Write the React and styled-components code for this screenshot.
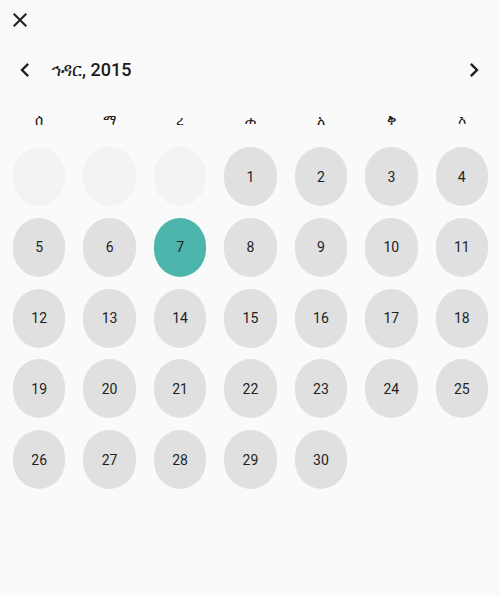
import styled, { createGlobalStyle } from "styled-components"

const GlobalStyle = createGlobalStyle`
	html, body {
		margin: 0;
		padding: 0;
		background: #fafafa;
	}
	body {
		font-family: Roboto, "Noto Sans", "DejaVu Sans", sans-serif;
		color: #1f1f1f;
	}
`

const Page = styled.div`
	width: 500px;
	height: 595px;
	background: #fafafa;
	display: flex;
	flex-direction: column;
`

const TopBar = styled.div`
	display: flex;
	padding: 8px;
`

const IconButton = styled.button`
	border: none;
	background: transparent;
	padding: 0;
	display: flex;
	align-items: center;
	justify-content: center;
	color: #1f1f1f;
	cursor: pointer;
	&:focus {
		outline: none;
	}
`

const MonthBar = styled.div`
	display: flex;
	align-items: center;
	padding: 0 12px 0 11px;
	margin-top: 16px;
	height: 28px;
`

const Title = styled.div`
	flex: 1;
	margin-left: 12px;
	font-size: 18px;
	font-weight: 500;
	color: #1a1a1a;
`

const Grid = styled.div`
	display: grid;
	grid-template-columns: repeat(7, 1fr);
	column-gap: 18px;
	padding: 0 12px 0 13px;
`

const WeekDays = styled(Grid)`
	margin-top: 25px;
	height: 22px;
	align-items: center;
`

const WeekDay = styled.div`
	text-align: center;
	font-size: 14px;
	color: #1a1a1a;
`

const Days = styled(Grid)`
	margin-top: 16px;
	row-gap: 11.75px;
`

const Day = styled.div`
	height: 59px;
	border-radius: 26px / 28px;
	display: flex;
	align-items: center;
	justify-content: center;
	font-size: 14px;
	color: #1f1f1f;
	background: ${(p) => (p.$selected ? "#4db6ac" : p.$blank ? "#f3f3f3" : "#e0e0e0")};
`

const Spacer = styled.div`
	height: 59px;
`

function Close() {
	return (
		<svg width="24" height="24" viewBox="0 0 24 24" fill="currentColor">
			<path d="M19 6.41L17.59 5 12 10.59 6.41 5 5 6.41 10.59 12 5 17.59 6.41 19 12 13.41 17.59 19 19 17.59 13.41 12z" />
		</svg>
	)
}

function Chevron({ right }) {
	return (
		<svg width="28" height="28" viewBox="0 0 24 24" fill="currentColor">
			{right ? (
				<path d="M10 6L8.59 7.41 13.17 12l-4.58 4.59L10 18l6-6z" />
			) : (
				<path d="M15.41 7.41L14 6l-6 6 6 6 1.41-1.41L10.83 12z" />
			)}
		</svg>
	)
}

const weekDays = ["ሰ", "ማ", "ረ", "ሐ", "አ", "ቅ", "እ"]
const offset = 3
const selected = 7

export default function App() {
	const cells = []
	for (let i = 0; i < offset; i++) cells.push(<Day key={"b" + i} $blank />)
	for (let d = 1; d <= 30; d++) {
		cells.push(
			<Day key={d} $selected={d === selected}>
				{d}
			</Day>
		)
	}
	cells.push(<Spacer key="s" />)

	return (
		<>
			<GlobalStyle />
			<Page>
				<TopBar>
					<IconButton>
						<Close />
					</IconButton>
				</TopBar>
				<MonthBar>
					<IconButton>
						<Chevron />
					</IconButton>
					<Title>ኅዳር, 2015</Title>
					<IconButton>
						<Chevron right />
					</IconButton>
				</MonthBar>
				<WeekDays>
					{weekDays.map((w, i) => (
						<WeekDay key={i}>{w}</WeekDay>
					))}
				</WeekDays>
				<Days>{cells}</Days>
			</Page>
		</>
	)
}
